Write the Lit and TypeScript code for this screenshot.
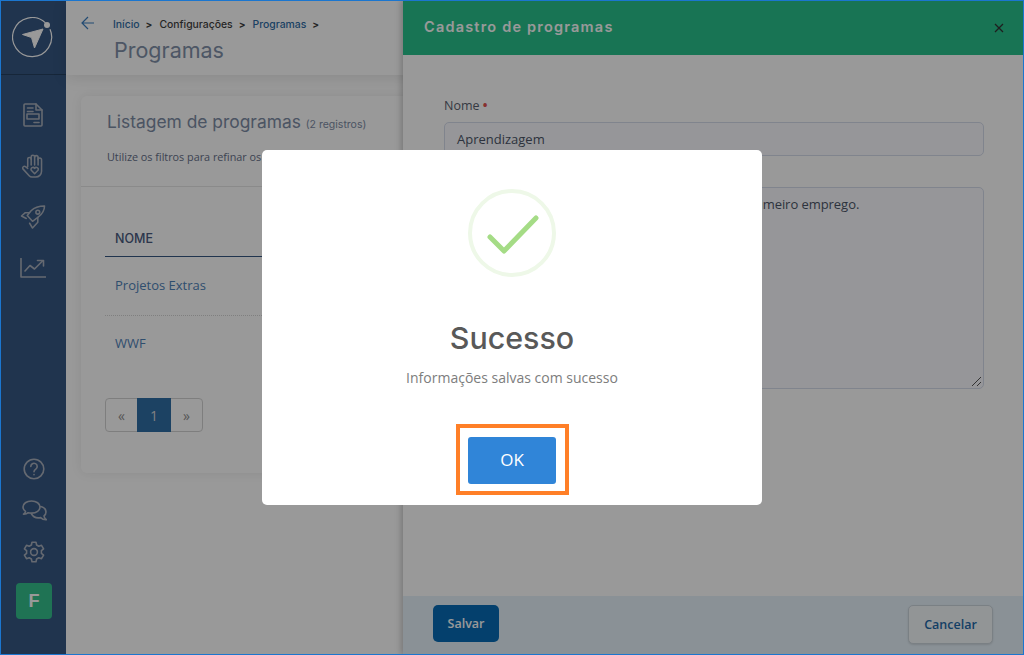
import { css, html, LitElement } from "lit";
import { customElement } from "lit/decorators.js";

@customElement("app-root")
export class AppRoot extends LitElement {
  static styles = css`
    * {
      box-sizing: border-box;
    }

    :host {
      display: block;
      position: relative;
      width: 1024px;
      height: 655px;
      overflow: hidden;
      background: #fff;
      font-family: "Open Sans", "Liberation Sans", sans-serif;
    }

    .page {
      display: flex;
      height: 100%;
    }

    .sidebar {
      flex: 0 0 66px;
      display: flex;
      flex-direction: column;
      align-items: center;
      background: #365782;
      color: #a9b0bc;
    }
    .logo {
      align-self: stretch;
      height: 75px;
      padding-top: 17px;
      display: flex;
      justify-content: center;
      border-bottom: 1px solid #25405f;
    }
    .nav {
      display: flex;
      flex-direction: column;
      align-items: center;
      margin-top: 28px;
      gap: 27px;
    }
    .nav svg,
    .tools svg {
      display: block;
      fill: none;
      stroke: currentColor;
      stroke-width: 1.6;
      stroke-linecap: round;
      stroke-linejoin: round;
    }
    .nav svg:last-child {
      margin-top: 2px;
    }
    .tools {
      margin: auto 0 0 2px;
      display: flex;
      flex-direction: column;
      align-items: center;
      gap: 20px;
      padding-bottom: 36px;
    }
    .avatar {
      width: 36px;
      height: 36px;
      border-radius: 4px;
      background: #35c08d;
      color: #fff;
      display: flex;
      align-items: center;
      justify-content: center;
      font: bold 18px "Liberation Sans", sans-serif;
    }

    .main {
      flex: 1;
      min-width: 0;
    }
    .topbar {
      height: 75px;
      display: flex;
      gap: 18px;
      padding: 16px 0 0 15px;
      box-shadow: 0 3px 14px rgba(0, 0, 0, 0.1);
    }
    .back {
      stroke: #3b7ec0;
      fill: none;
      stroke-width: 1.2;
    }
    .crumbs {
      display: flex;
      align-items: center;
      gap: 5px;
      height: 16px;
      font: 500 10.4px "Inter", "Liberation Sans", sans-serif;
      color: #3f3f3f;
    }
    .crumbs a {
      color: #2f6da6;
    }
    .crumbs b {
      font-size: 10px;
      margin: 0 2px 0 1px;
    }
    .page-title {
      margin: 5px 0 0 1px;
      font: 400 21.5px "Inter", "Liberation Sans", sans-serif;
      color: #8090a8;
    }

    .card {
      margin: 21px 0 0 15px;
      height: 377px;
      border-radius: 6px;
      box-shadow: 0 0 12px rgba(0, 0, 0, 0.08);
      display: flex;
      flex-direction: column;
    }
    .card-head {
      height: 91px;
      padding: 15px 26px 0;
      border-bottom: 1px solid #e6e6e6;
    }
    .card-title {
      margin: 0;
      font: 400 17.4px "Inter", "Liberation Sans", sans-serif;
      color: #7d8ca5;
      white-space: nowrap;
    }
    .card-title small {
      font-size: 10.5px;
      font-weight: 400;
    }
    .hint {
      margin: 17px 0 0;
      font-size: 10.8px;
      color: #66708a;
      white-space: nowrap;
    }
    .table {
      padding: 33px 24px 0;
    }
    .th {
      height: 37px;
      padding: 11px 10px 0;
      border-bottom: 1px solid #365782;
      font: 500 12.5px "Inter", "Liberation Sans", sans-serif;
      color: #4a5a80;
    }
    .td {
      height: 58px;
      padding: 19px 10px 0;
      font-size: 13px;
      color: #4f82b8;
    }
    .td + .td {
      padding-top: 18px;
      border-top: 1px dotted #d4d4d4;
    }
    .pager {
      display: inline-flex;
      height: 34px;
      margin-top: 25px;
      border: 1px solid #d3d3d3;
      border-radius: 4px;
      font-size: 14px;
      color: #8f8f8f;
    }
    .pager span {
      width: 31px;
      display: flex;
      align-items: center;
      justify-content: center;
    }
    .pager .on {
      width: 34px;
      margin: -1px 0;
      background: #2f6ea6;
      color: #d8d8d8;
    }

    .drawer {
      position: absolute;
      top: 0;
      bottom: 0;
      left: 403px;
      right: 0;
      display: flex;
      flex-direction: column;
      background: #fff;
      box-shadow: -2px 0 6px rgba(0, 0, 0, 0.22);
    }
    .drawer-head {
      flex: 0 0 55px;
      display: flex;
      align-items: center;
      justify-content: space-between;
      padding: 0 20px 2px 21px;
      background: #28c28d;
      color: #fff;
    }
    .drawer-title {
      font: 600 14.5px "Inter", "Liberation Sans", sans-serif;
      letter-spacing: 1.2px;
      color: #fff;
    }
    .close {
      stroke: #333;
      stroke-width: 1.3;
      fill: none;
      margin-top: 2px;
    }
    .form {
      flex: 1;
      padding: 42px 40px 0 41px;
    }
    label {
      display: block;
      font-size: 12.5px;
      color: #5a5f70;
      height: 17px;
    }
    label i {
      color: #e2514f;
      font-style: normal;
      font-weight: bold;
    }
    .input {
      height: 34px;
      margin-top: 8px;
      padding: 7px 12px;
      border: 1px solid #d6dcec;
      border-radius: 5px;
      font-size: 13px;
      color: #4c5568;
      background: #fafbff;
    }
    .form label + .input + label {
      margin-top: 14px;
    }
    .textarea {
      position: relative;
      height: 202px;
      padding: 7px 12px;
      border: 1px solid #d6dcec;
      border-radius: 5px;
      font-size: 13px;
      letter-spacing: -0.05px;
      color: #4c5568;
      background: #fafbff;
      white-space: nowrap;
    }
    .grip {
      position: absolute;
      right: 1px;
      bottom: 1px;
      stroke: #555;
      stroke-width: 1;
    }
    .footer {
      flex: 0 0 59px;
      display: flex;
      align-items: flex-start;
      justify-content: space-between;
      padding: 9px 31px 0 30px;
      background: #e6f2fa;
    }
    .btn {
      display: flex;
      align-items: center;
      justify-content: center;
      height: 37px;
      border-radius: 5px;
      font-size: 12.5px;
      font-weight: 600;
    }
    .save {
      width: 66px;
      background: #076cb6;
      color: #fff;
    }
    .cancel {
      width: 85px;
      height: 39px;
      background: #f4f8fb;
      border: 1px solid #ccd6dd;
      box-shadow: 0 1px 2px rgba(0, 0, 0, 0.12);
      color: #1f6aa8;
    }

    .scrim {
      position: absolute;
      inset: 0;
      background: rgba(0, 0, 0, 0.4);
    }
    .modal {
      position: absolute;
      left: 262px;
      top: 150px;
      width: 500px;
      height: 355px;
      display: flex;
      flex-direction: column;
      align-items: center;
      padding-top: 39px;
      background: #fff;
      border-radius: 5px;
    }
    .modal h2 {
      margin: 39px 0 0;
      font: 500 30.4px/44px "Inter", "Liberation Sans", sans-serif;
      color: #595959;
    }
    .modal p {
      margin: 8px 0 0;
      font-size: 14px;
      line-height: 20px;
      color: #7d7d7d;
    }
    .ok {
      width: 88px;
      height: 47px;
      margin-top: 49px;
      padding-bottom: 2px;
      display: flex;
      align-items: center;
      justify-content: center;
      border-radius: 3px;
      background: #3085d8;
      color: #fff;
      font-size: 17px;
    }
    .marker {
      position: absolute;
      left: 456px;
      top: 424px;
      width: 113px;
      height: 71px;
      border: 4px solid #ff7f27;
    }
    .frame {
      position: absolute;
      inset: 0;
      border: 1px solid #1b76cf;
      pointer-events: none;
    }
  `;

  render() {
    return html`
      <div class="page">
        <aside class="sidebar">
          <div class="logo">
            <svg width="42" height="42" viewBox="0 0 42 42">
              <path
                d="M33.5 5.9 A19.5 19.5 0 1 0 38 12.3"
                fill="none"
                stroke="#fff"
                stroke-width="1.2"
              />
              <circle cx="35" cy="8" r="3" fill="#fff" />
              <path
                d="M10.5 17.5 L31 12 L22.5 31 L19.5 20.5 Z"
                fill="#fff"
                stroke="#fff"
                stroke-width="1"
                stroke-linejoin="round"
              />
            </svg>
          </div>
          <nav class="nav">
            <svg width="20" height="24" viewBox="0 0 20 24">
              <path d="M2 1 H13 L19 7 V22 a1 1 0 0 1 -1 1 H2 a1 1 0 0 1 -1 -1 V2 a1 1 0 0 1 1 -1 Z" />
              <path d="M13 1 V7 H19" />
              <path d="M4.5 5 H10 M4.5 8.5 H10" />
              <rect x="4" y="11" width="12" height="5" />
              <path d="M11 19.5 H16" />
            </svg>
            <svg width="24" height="24" viewBox="0 0 24 25">
              <path d="M6.5 13 V5.5 a1.8 1.8 0 0 1 3.6 0 V3 a1.8 1.8 0 0 1 3.6 0 V3.5 a1.8 1.8 0 0 1 3.6 0 V6 a1.8 1.8 0 0 1 3.6 0 V18 a6 6 0 0 1 -6 6 H11 a4 4 0 0 1 -3 -1.4 L1.5 15.5 C0.5 13.8 2.5 12 4.2 13.2 L6.5 15" />
              <path d="M10.1 5 V11.5 M13.7 3 V11.5 M17.3 4 V11.5" />
              <path d="M13.7 20.5 L10.2 17 a2 2 0 0 1 3.5 -2 a2 2 0 0 1 3.5 2 Z" />
            </svg>
            <svg width="26" height="24" viewBox="0 0 26 25">
              <path d="M25 1 C19 1 14 3 11 6 L7 11 L12.5 17 L18 13 C22 10 25 6 25 1 Z" />
              <circle cx="18" cy="7.5" r="2" />
              <path d="M9 8 H5 L1 11.5 L6 14" />
              <path d="M18 13 V18 L12.5 24 L9.5 19" />
            </svg>
            <svg width="26" height="20" viewBox="0 0 26 20">
              <path d="M1 0.5 V19 H25.5" />
              <path d="M5 13 L10 7.5 L14.5 11 L22.5 3" />
              <path d="M17.5 2.5 H23.5 V8" />
            </svg>
          </nav>
          <div class="tools">
            <svg width="22" height="22" viewBox="0 0 22 22">
              <circle cx="11" cy="11" r="9.8" />
              <path d="M7.8 8.5 a3.2 3.2 0 1 1 5 2.6 c-1.2 .8 -1.8 1.4 -1.8 2.6" />
              <path d="M11 16.6 V16.8" />
            </svg>
            <svg width="25" height="21" viewBox="0 0 25 21">
              <path d="M9.5 1 C4.5 1 1 3.7 1 7 C1 8.8 2 10.3 3.5 11.4 C3.4 12.6 2.5 13.6 1.5 14.2 C3.5 14.3 5 13.8 6.2 12.7 C7.2 13 8.3 13.1 9.5 13.1 C14.5 13.1 18 10.4 18 7 C18 3.7 14.5 1 9.5 1 Z" />
              <path d="M18.8 6.5 C22 7.3 24 9.4 24 12 C24 13.6 23.2 15 22 15.9 C22.1 17.4 22.8 18.6 24.3 19.7 C22 19.8 20 19 18.6 17.6 C14.5 18.4 11.2 17 9.5 14" />
            </svg>
            <svg width="22" height="22" viewBox="0 0 22 22">
              <circle cx="11" cy="11" r="3.4" />
              <path d="M9 1.2 H13 L13.6 4 L15.8 5.2 L18.5 4.3 L20.6 7.8 L18.4 9.6 V12.4 L20.6 14.2 L18.5 17.7 L15.8 16.8 L13.6 18 L13 20.8 H9 L8.4 18 L6.2 16.8 L3.5 17.7 L1.4 14.2 L3.6 12.4 V9.6 L1.4 7.8 L3.5 4.3 L6.2 5.2 L8.4 4 Z" />
            </svg>
            <div class="avatar">F</div>
          </div>
        </aside>

        <main class="main">
          <header class="topbar">
            <svg class="back" width="14" height="14" viewBox="0 0 14 14">
              <path d="M13 7 H1 M7 1 L1 7 L7 13" />
            </svg>
            <div>
              <div class="crumbs">
                <a>Início</a><b>&gt;</b>
                <span>Configurações</span><b>&gt;</b>
                <a>Programas</a><b>&gt;</b>
              </div>
              <h1 class="page-title">Programas</h1>
            </div>
          </header>

          <section class="card">
            <div class="card-head">
              <h2 class="card-title">Listagem de programas <small>(2 registros)</small></h2>
              <p class="hint">Utilize os filtros para refinar os resultados da listagem</p>
            </div>
            <div class="table">
              <div class="th">NOME</div>
              <div class="td">Projetos Extras</div>
              <div class="td">WWF</div>
              <div class="pager">
                <span>«</span>
                <span class="on">1</span>
                <span>»</span>
              </div>
            </div>
          </section>
        </main>
      </div>

      <aside class="drawer">
        <div class="drawer-head">
          <span class="drawer-title">Cadastro de programas</span>
          <svg class="close" width="10" height="10" viewBox="0 0 10 10">
            <path d="M1 1 L9 9 M9 1 L1 9" />
          </svg>
        </div>
        <div class="form">
          <label>Nome <i>•</i></label>
          <div class="input">Aprendizagem</div>
          <label>Descrição</label>
          <div class="textarea">
            Programa voltado para os jovens que buscam o primeiro emprego.
            <svg class="grip" width="11" height="11" viewBox="0 0 11 11">
              <path d="M1 10 L10 1 M6 10 L10 6" />
            </svg>
          </div>
        </div>
        <div class="footer">
          <div class="btn save">Salvar</div>
          <div class="btn cancel">Cancelar</div>
        </div>
      </aside>

      <div class="scrim"></div>

      <div class="modal">
        <svg width="88" height="88" viewBox="0 0 88 88">
          <circle cx="44" cy="44" r="42" fill="none" stroke="#eef8e8" stroke-width="4" />
          <path
            d="M22 48 L36 62 L68 29"
            fill="none"
            stroke="#a5dc86"
            stroke-width="5"
            stroke-linecap="round"
            stroke-linejoin="round"
          />
        </svg>
        <h2>Sucesso</h2>
        <p>Informações salvas com sucesso</p>
        <div class="ok">OK</div>
      </div>

      <div class="marker"></div>
      <div class="frame"></div>
    `;
  }
}
